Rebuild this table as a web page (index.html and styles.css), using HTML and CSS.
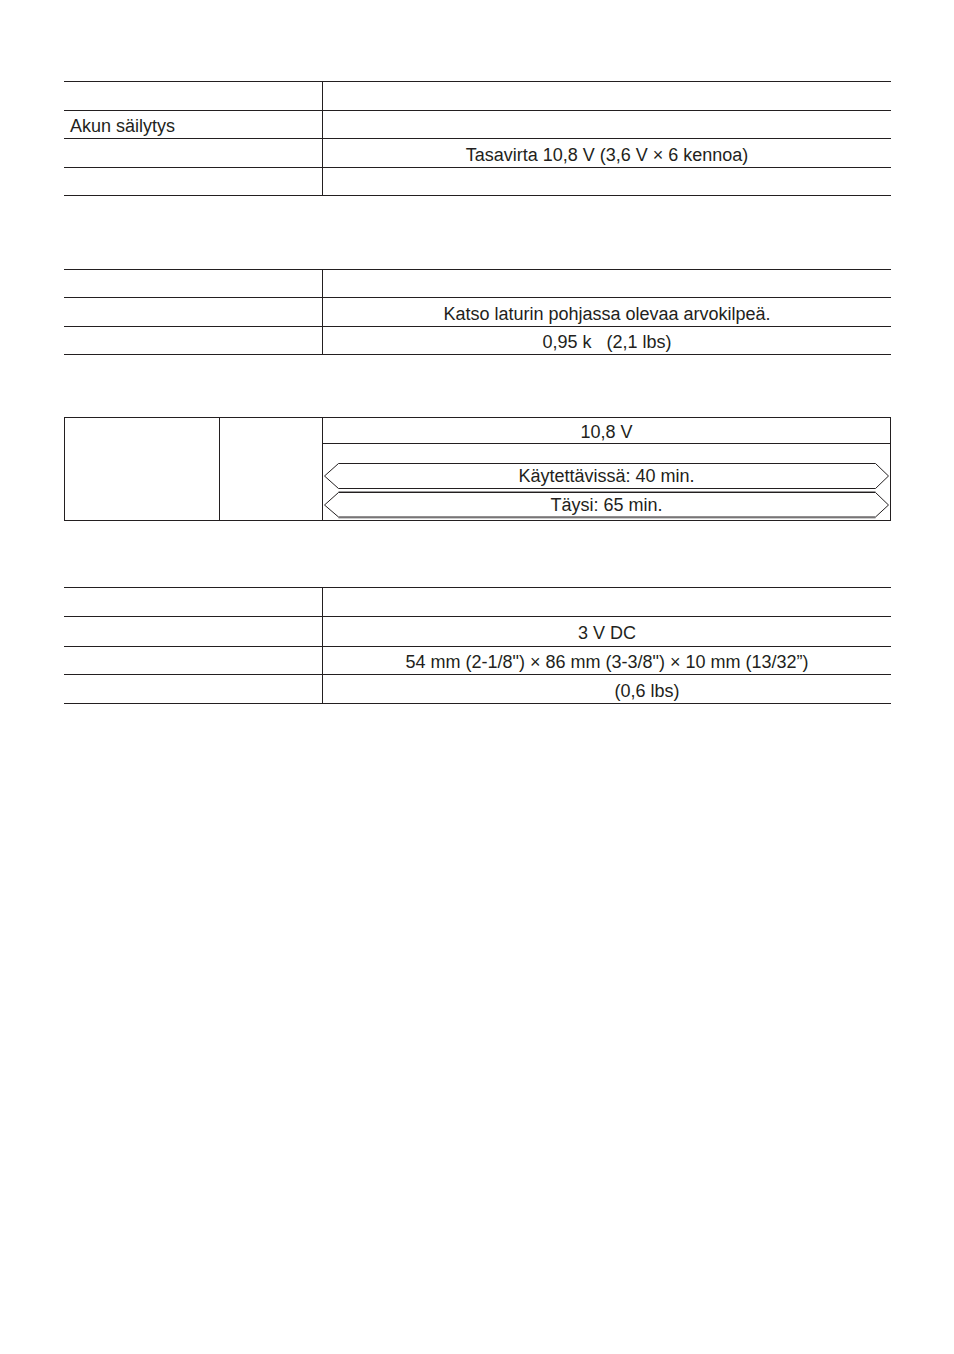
FILE: index.html
```html
<!DOCTYPE html>
<html lang="fi">
<head>
<meta charset="utf-8">
<title>Tekniset tiedot</title>
<link rel="stylesheet" href="styles.css">
</head>
<body>
<div class="page">
  <div class="spec t1">
    <div class="row h29"><div class="label"></div><div class="value"></div></div>
    <div class="row h28"><div class="label">Akun säilytys</div><div class="value"></div></div>
    <div class="row h29"><div class="label"></div><div class="value">Tasavirta 10,8 V (3,6 V × 6 kennoa)</div></div>
    <div class="row h28"><div class="label"></div><div class="value"></div></div>
  </div>

  <div class="spec t2">
    <div class="row h28"><div class="label"></div><div class="value"></div></div>
    <div class="row h29"><div class="label"></div><div class="value">Katso laturin pohjassa olevaa arvokilpeä.</div></div>
    <div class="row h28"><div class="label"></div><div class="value">0,95 k&nbsp;&nbsp; (2,1 lbs)</div></div>
  </div>

  <div class="charge">
    <div class="c1"></div>
    <div class="c2"></div>
    <div class="c3">
      <div class="volt">10,8 V</div>
      <div class="times">
        <div class="arrow">
          <svg class="arrow-shape" width="567" height="26" viewBox="0 0 567 26">
            <polygon points="1.5,13 15.5,0.5 552.5,0.5 565.5,13 552.5,25.5 15.5,25.5" fill="none" stroke="#231f20" stroke-width="1"/>
          </svg>
          <span class="arrow-text">Käytettävissä: 40 min.</span>
        </div>
        <div class="arrow">
          <svg class="arrow-shape" width="567" height="26" viewBox="0 0 567 26">
            <polyline points="15.5,26 552.5,26" fill="none" stroke="#9a9a9a" stroke-width="1"/>
            <polyline points="15.5,-0.5 552.5,-0.5" fill="none" stroke="#9a9a9a" stroke-width="1"/>
            <polygon points="1.5,13 15.5,0.5 552.5,0.5 565.5,13 552.5,25 15.5,25" fill="none" stroke="#231f20" stroke-width="1"/>
          </svg>
          <span class="arrow-text">Täysi: 65 min.</span>
        </div>
      </div>
    </div>
  </div>

  <div class="spec t4">
    <div class="row h29"><div class="label"></div><div class="value"></div></div>
    <div class="row h30"><div class="label"></div><div class="value">3 V DC</div></div>
    <div class="row h28"><div class="label"></div><div class="value">54 mm (2-1/8") × 86 mm (3-3/8") × 10 mm (13/32”)</div></div>
    <div class="row h29"><div class="label"></div><div class="value shifted">(0,6 lbs)</div></div>
  </div>
</div>
</body>
</html>
```

FILE: styles.css
```css
html, body {
  margin: 0;
  padding: 0;
  background: #ffffff;
}

body {
  font-family: "Liberation Sans", Arial, Helvetica, sans-serif;
  font-size: 18px;
  color: #231f20;
}

.page {
  width: 954px;
  height: 1354px;
  box-sizing: border-box;
  padding: 81px 0 0 64px;
}

.spec {
  width: 827px;
  border-top: 1px solid #231f20;
}

.t2 { margin-top: 73px; }
.t4 { margin-top: 66px; }

.row {
  display: grid;
  grid-template-columns: 258px 1fr;
  box-sizing: border-box;
  border-bottom: 1px solid #231f20;
}

.h28 { height: 28px; }
.h29 { height: 29px; }
.h30 { height: 30px; }

.label {
  display: flex;
  align-items: center;
  padding-left: 6px;
  padding-top: 4px;
  white-space: nowrap;
}

.value {
  display: flex;
  align-items: center;
  justify-content: center;
  padding-top: 4px;
  border-left: 1px solid #231f20;
  white-space: nowrap;
}

.value.shifted {
  padding-left: 80px;
}

/* charging table */
.charge {
  margin-top: 62px;
  width: 827px;
  box-sizing: border-box;
  border: 1px solid #231f20;
  display: grid;
  grid-template-columns: 154px 103px 1fr;
  height: 104px;
}

.c2, .c3 {
  border-left: 1px solid #231f20;
}

.c3 {
  display: flex;
  flex-direction: column;
}

.volt {
  height: 26px;
  box-sizing: border-box;
  border-bottom: 1px solid #231f20;
  padding-top: 4px;
  display: flex;
  align-items: center;
  justify-content: center;
}

.times {
  display: flex;
  flex-direction: column;
  gap: 3px;
  padding-top: 19px;
}

.arrow {
  position: relative;
  width: 567px;
  height: 26px;
  display: flex;
  align-items: center;
  justify-content: center;
}

.arrow-shape {
  position: absolute;
  left: 0;
  top: 0;
  overflow: visible;
}

.arrow-text {
  position: relative;
  line-height: 26px;
}
```
